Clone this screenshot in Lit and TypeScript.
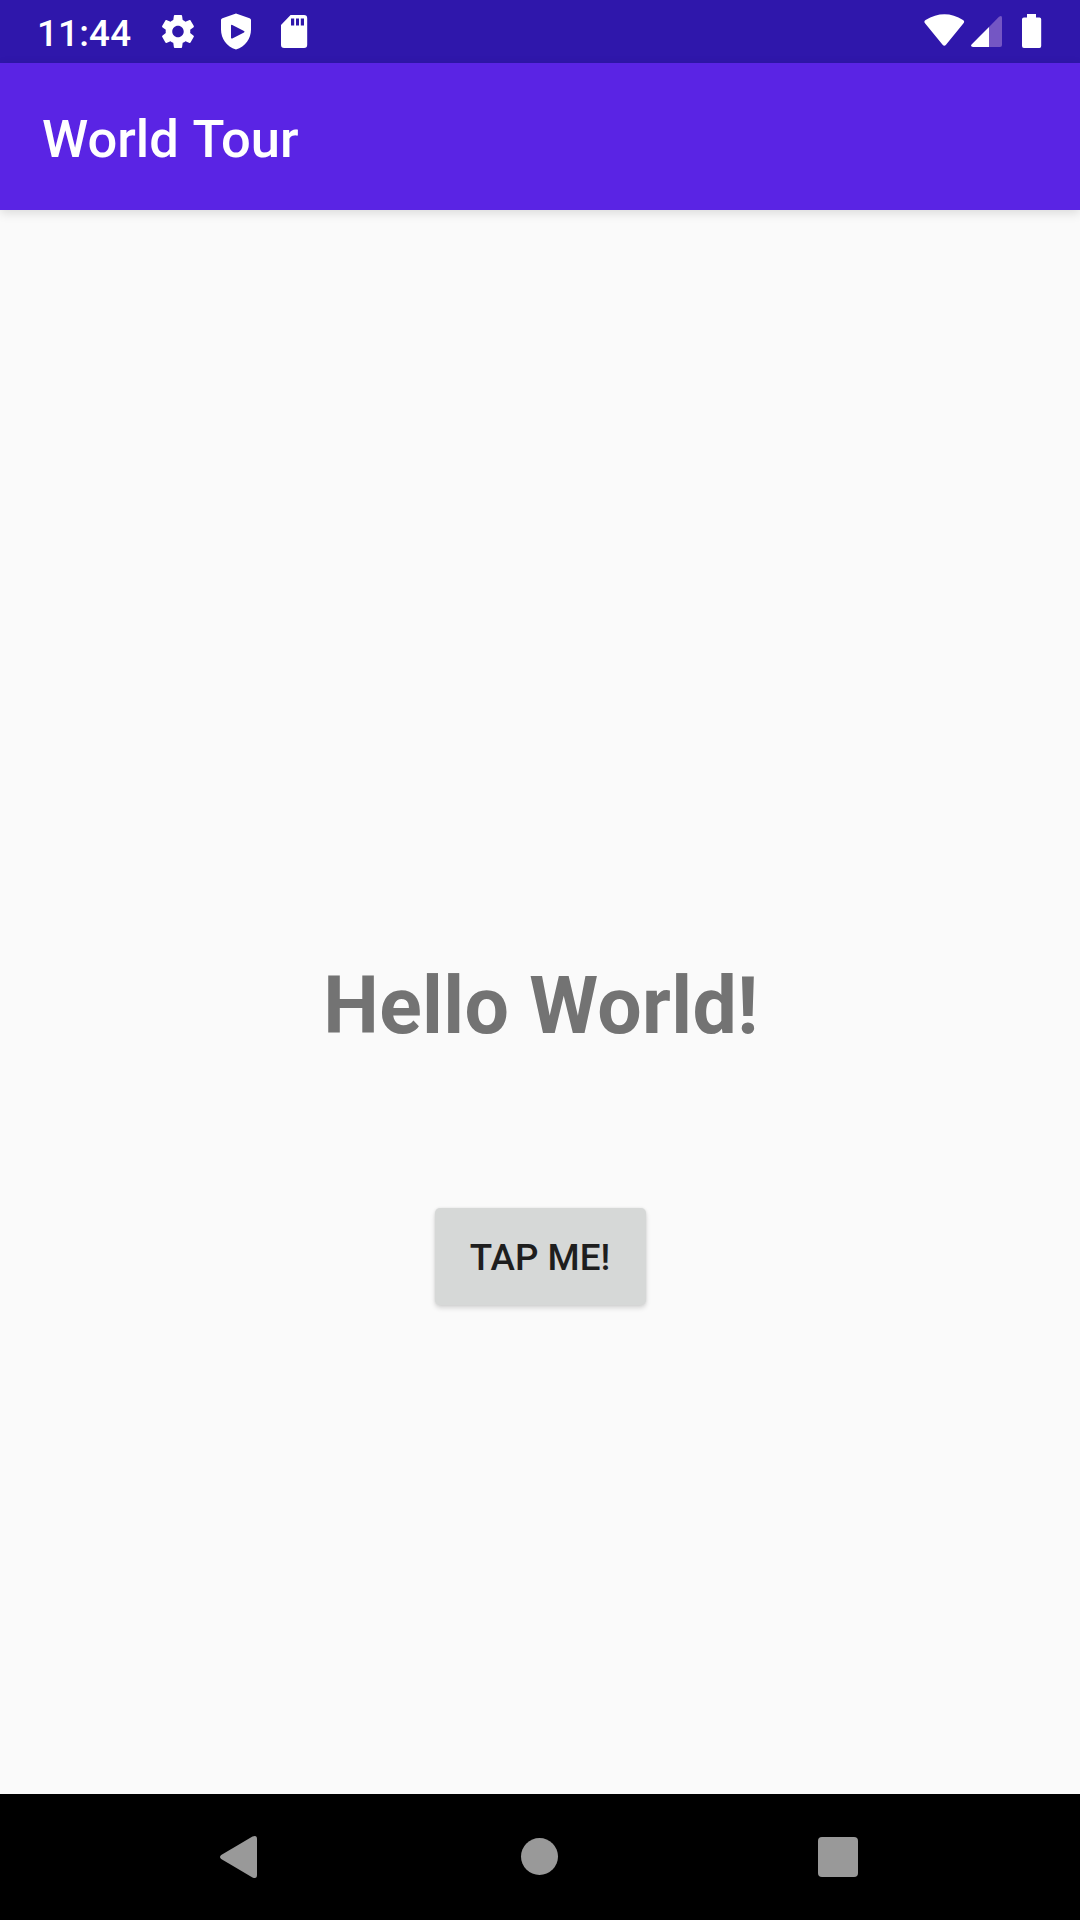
import { LitElement, html, css } from "lit";
import { customElement, property } from "lit/decorators.js";

@customElement("status-bar")
class StatusBar extends LitElement {
  @property() time = "11:44";

  static styles = css`
    :host {
      display: flex;
      flex: none;
      height: 63px;
      background: #2f17ab;
      color: #fff;
      justify-content: space-between;
      padding: 0 24px 0 37px;
      box-sizing: border-box;
    }
    .group {
      display: flex;
    }
    .clock {
      width: 112px;
      font-size: 36.75px;
      line-height: 68px;
      font-weight: 500;
      letter-spacing: 0.2px;
      white-space: nowrap;
    }
    svg {
      display: block;
      fill: currentColor;
      flex: none;
    }
    .faded {
      fill: #7456c4;
    }
  `;

  render() {
    return html`
      <div class="group">
        <span class="clock">${this.time}</span>
        <svg width="58" height="63" viewBox="0 0 58 63">
          <path
            transform="translate(9.3 11.8) scale(1.64)"
            d="M19.43 12.98c.04-.32.07-.64.07-.98s-.03-.66-.07-.98l2.11-1.65c.19-.15.24-.42.12-.64l-2-3.46c-.12-.22-.39-.3-.61-.22l-2.49 1c-.52-.4-1.08-.73-1.69-.98l-.38-2.65C14.46 2.18 14.25 2 14 2h-4c-.25 0-.46.18-.49.42l-.38 2.65c-.61.25-1.17.59-1.69.98l-2.49-1c-.23-.09-.49 0-.61.22l-2 3.46c-.13.22-.07.49.12.64l2.11 1.65c-.04.32-.07.65-.07.98s.03.66.07.98l-2.11 1.65c-.19.15-.24.42-.12.64l2 3.46c.12.22.39.3.61.22l2.49-1c.52.4 1.08.73 1.69.98l.38 2.65c.03.24.24.42.49.42h4c.25 0 .46-.18.49-.42l.38-2.65c.61-.25 1.17-.59 1.69-.98l2.49 1c.23.09.49 0 .61-.22l2-3.46c.12-.22.07-.49-.12-.64l-2.11-1.65zM12 15.5c-1.93 0-3.5-1.57-3.5-3.5s1.57-3.5 3.5-3.5 3.5 1.57 3.5 3.5-1.57 3.5-3.5 3.5z"
          />
        </svg>
        <svg width="58" height="63" viewBox="0 0 58 63">
          <path
            fill-rule="evenodd"
            d="M29 13.6L42.6 18.2Q44 18.8 44 20V29.5C44 38.5 38.5 46.5 29 49.6C19.5 46.5 14 38.5 14 29.5V20Q14 18.8 15.4 18.2ZM24 25.8V37.6Q24 39 25.3 38.4L37 32.5Q38.2 31.7 37 30.9L25.3 25Q24 24.4 24 25.8Z"
          />
        </svg>
        <svg width="58" height="63" viewBox="0 0 58 63">
          <path
            fill-rule="evenodd"
            d="M25.6 15H39Q42.2 15 42.2 18.2V44.8Q42.2 48 39 48H19.2Q16 48 16 44.8V25ZM26 18.4V25.4H29.2V18.4ZM31 18.4V25.4H34V18.4ZM35.8 18.4V25.4H39V18.4Z"
          />
        </svg>
      </div>
      <div class="group">
        <svg width="50" height="63" viewBox="0 0 50 63">
          <path
            d="M5.2 23.4Q3.3 21.6 5.6 20C18 12.3 31 12.3 43 20Q45.2 21.6 43.3 23.4L26 44.8Q24.3 46.8 22.6 44.8Z"
          />
        </svg>
        <svg width="38" height="63" viewBox="0 0 38 63">
          <path
            class="faded"
            d="M19 27L29 16.8Q32 14.6 32 17.8V45Q32 47 30 47H19Z"
          />
          <path d="M19 27V47H3Q-.2 46.6 1.8 44.2Z" />
        </svg>
        <svg width="48" height="63" viewBox="0 0 48 63">
          <path
            d="M19 14H28V17.5H31.5Q33.2 17.5 33.2 19.3V46Q33.2 47.9 31.5 47.9H16Q14 47.9 14 46V19.3Q14 17.5 16 17.5H19Z"
          />
        </svg>
      </div>
    `;
  }
}

@customElement("app-bar")
class AppBar extends LitElement {
  @property() heading = "";

  static styles = css`
    :host {
      display: flex;
      flex: none;
      align-items: center;
      height: 147px;
      padding: 5px 42px 0;
      box-sizing: border-box;
      background: #5a24e4;
      color: #fff;
      box-shadow: 0 3px 10px rgba(0, 0, 0, 0.13);
      z-index: 1;
    }
    .title {
      margin: 0;
      font-size: 52.5px;
      line-height: 62px;
      font-weight: 500;
      word-spacing: 2px;
      white-space: nowrap;
    }
  `;

  render() {
    return html`<h1 class="title">${this.heading}</h1>`;
  }
}

@customElement("nav-bar")
class NavBar extends LitElement {
  static styles = css`
    :host {
      display: flex;
      flex: none;
      height: 126px;
      justify-content: space-between;
      padding: 0 202px 0 200px;
      box-sizing: border-box;
      background: #000;
    }
    svg {
      display: block;
      fill: #999;
    }
  `;

  render() {
    return html`
      <svg width="80" height="126" viewBox="0 0 80 126">
        <path
          d="M21.2 61L52.5 42.6Q57 40.8 57 45V81Q57 85.2 52.5 83.4L21.2 65Q18.8 63 21.2 61Z"
        />
      </svg>
      <svg width="80" height="126" viewBox="0 0 80 126">
        <circle cx="40.5" cy="62.5" r="18.5" />
      </svg>
      <svg width="80" height="126" viewBox="0 0 80 126">
        <rect x="20" y="43" width="40" height="40" rx="4" />
      </svg>
    `;
  }
}

@customElement("app-root")
class AppRoot extends LitElement {
  static styles = css`
    :host {
      display: flex;
      flex-direction: column;
      width: 1080px;
      height: 1920px;
      background: #fafafa;
      font-family: Roboto, sans-serif;
      overflow: hidden;
    }
    .content {
      flex: 1;
      display: flex;
      flex-direction: column;
      align-items: center;
      padding-top: 750px;
    }
    .greeting {
      margin: 0;
      padding-left: 2px;
      font-size: 78.75px;
      line-height: 92px;
      font-weight: 700;
      letter-spacing: 0.35px;
      color: #737373;
      white-space: nowrap;
    }
    .tap {
      margin-top: 156px;
      width: 211px;
      height: 97px;
      padding: 2px 0 0;
      border: 0;
      border-radius: 5px;
      background: #d6d8d7;
      color: #1e1e1e;
      font-family: inherit;
      font-size: 36.75px;
      line-height: 43px;
      font-weight: 500;
      white-space: nowrap;
      box-shadow: 0 3px 5px rgba(0, 0, 0, 0.15), 0 0 3px rgba(0, 0, 0, 0.08);
    }
  `;

  render() {
    return html`
      <status-bar></status-bar>
      <app-bar heading="World Tour"></app-bar>
      <main class="content">
        <p class="greeting">Hello World!</p>
        <button class="tap">TAP ME!</button>
      </main>
      <nav-bar></nav-bar>
    `;
  }
}
